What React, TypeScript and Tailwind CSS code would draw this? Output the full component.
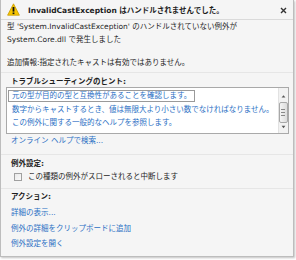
const font = { fontFamily: '"DejaVu Sans", "Noto Sans CJK JP", sans-serif' };

function WarningIcon() {
  return (
    <svg width="13" height="13" viewBox="0 0 13 13">
      <path d="M6.5 0.8 L12.4 12.2 L0.6 12.2 Z" fill="#f7c600" stroke="#c89a00" strokeWidth="0.8" strokeLinejoin="round" />
      <rect x="5.6" y="4" width="1.8" height="4.6" fill="#111" />
      <rect x="5.6" y="9.5" width="1.8" height="1.6" fill="#111" />
    </svg>
  );
}

function CloseIcon() {
  return (
    <svg width="7" height="7" viewBox="0 0 7 7">
      <path d="M1 1 L6 6 M6 1 L1 6" stroke="#333" strokeWidth="1.4" />
    </svg>
  );
}

function Scrollbar() {
  return (
    <div className="flex w-[12px] flex-col items-center border-l border-[#e2e2e2] bg-[#f2f2f2]">
      <svg width="7" height="12" viewBox="0 0 7 12" className="mt-[2px]">
        <path d="M1.5 8 L3.5 5.5 L5.5 8 Z" fill="#555" />
      </svg>
      <div className="mt-[1px] flex h-[21px] w-[9px] flex-col items-center justify-center gap-[2px] rounded-[2px] border border-[#a8a8a8] bg-gradient-to-r from-[#f4f4f4] to-[#dcdcdc]">
        <div className="h-px w-[4px] bg-[#888]" />
        <div className="h-px w-[4px] bg-[#888]" />
        <div className="h-px w-[4px] bg-[#888]" />
      </div>
      <svg width="7" height="10" viewBox="0 0 7 10" className="mt-auto mb-[1px]">
        <path d="M1.5 3 L3.5 5.5 L5.5 3 Z" fill="#555" />
      </svg>
    </div>
  );
}

const tips = [
  "元の型が目的の型と互換性があることを確認します。",
  "数字からキャストするとき、値は無限大より小さい数でなければなりません。",
  "この例外に関する一般的なヘルプを参照します。",
];

const actions = ["詳細の表示...", "例外の詳細をクリップボードに追加", "例外設定を開く"];

export default function App() {
  return (
    <div className="h-[260px] w-[296px] bg-white text-[7.5px] text-[#1e1e1e]" style={font}>
      <div className="flex h-[257px] w-[294px] flex-col border-x border-b border-[#bdbdbd] bg-[#f5f5f5] shadow-[1px_1px_2px_rgba(0,0,0,0.25)]">
        <div className="flex h-[20px] items-center border-b border-[#dadada] pl-[6px] pr-[6px]">
          <WarningIcon />
          <span className="ml-[8px] mt-[2px] font-bold whitespace-nowrap">InvalidCastException はハンドルされませんでした。</span>
          <span className="ml-auto mt-[2px] flex">
            <CloseIcon />
          </span>
        </div>

        <div className="pl-[6px] leading-[13px] whitespace-nowrap">
          <div>型 'System.InvalidCastException' のハンドルされていない例外が</div>
          <div>System.Core.dll で発生しました</div>
          <div className="mt-[10px] mb-[3px]">追加情報:指定されたキャストは有効ではありません。</div>
        </div>

        <div className="border-t border-[#e6e6e6] pt-[3px] pb-[8px]">
          <div className="h-[11px] pl-[10px] leading-[11px] font-bold">トラブルシューティングのヒント:</div>
          <div className="ml-[5px] mr-[4px] flex h-[47px] border border-[#a9a9a9] bg-white">
            <div className="flex-1 pt-[1px] pl-[1px] text-[#2a6fc4] whitespace-nowrap">
              {tips.map((tip, i) => (
                <div key={tip} className="flex h-[13.5px] items-center">
                  <span className={i === 0 ? "border border-[#9a9a9a] px-[3px] leading-[10px]" : "px-[4px]"}>{tip}</span>
                </div>
              ))}
            </div>
            <Scrollbar />
          </div>
          <div className="mt-[1px] h-[11px] pl-[10px] leading-[11px] text-[#2a6fc4]">オンライン ヘルプで検索...</div>
        </div>

        <div className="border-t border-[#e6e6e6] pt-[3px] pb-[5px]">
          <div className="h-[11px] pl-[10px] leading-[11px] font-bold">例外設定:</div>
          <div className="mt-[2px] flex h-[12px] items-center pl-[13px]">
            <div className="h-[8px] w-[8px] border border-[#a0a0a0] bg-gradient-to-br from-[#e9e9e9] to-[#fafafa]" />
            <span className="ml-[6px]">この種類の例外がスローされると中断します</span>
          </div>
        </div>

        <div className="border-t border-[#e6e6e6] pt-[2px]">
          <div className="h-[11px] pl-[10px] leading-[11px] font-bold">アクション:</div>
          <div className="mt-[3px] pl-[10px] text-[#2a6fc4]">
            {actions.map((a) => (
              <div key={a} className="h-[15.5px] leading-[15.5px]">
                {a}
              </div>
            ))}
          </div>
        </div>
      </div>
    </div>
  );
}
